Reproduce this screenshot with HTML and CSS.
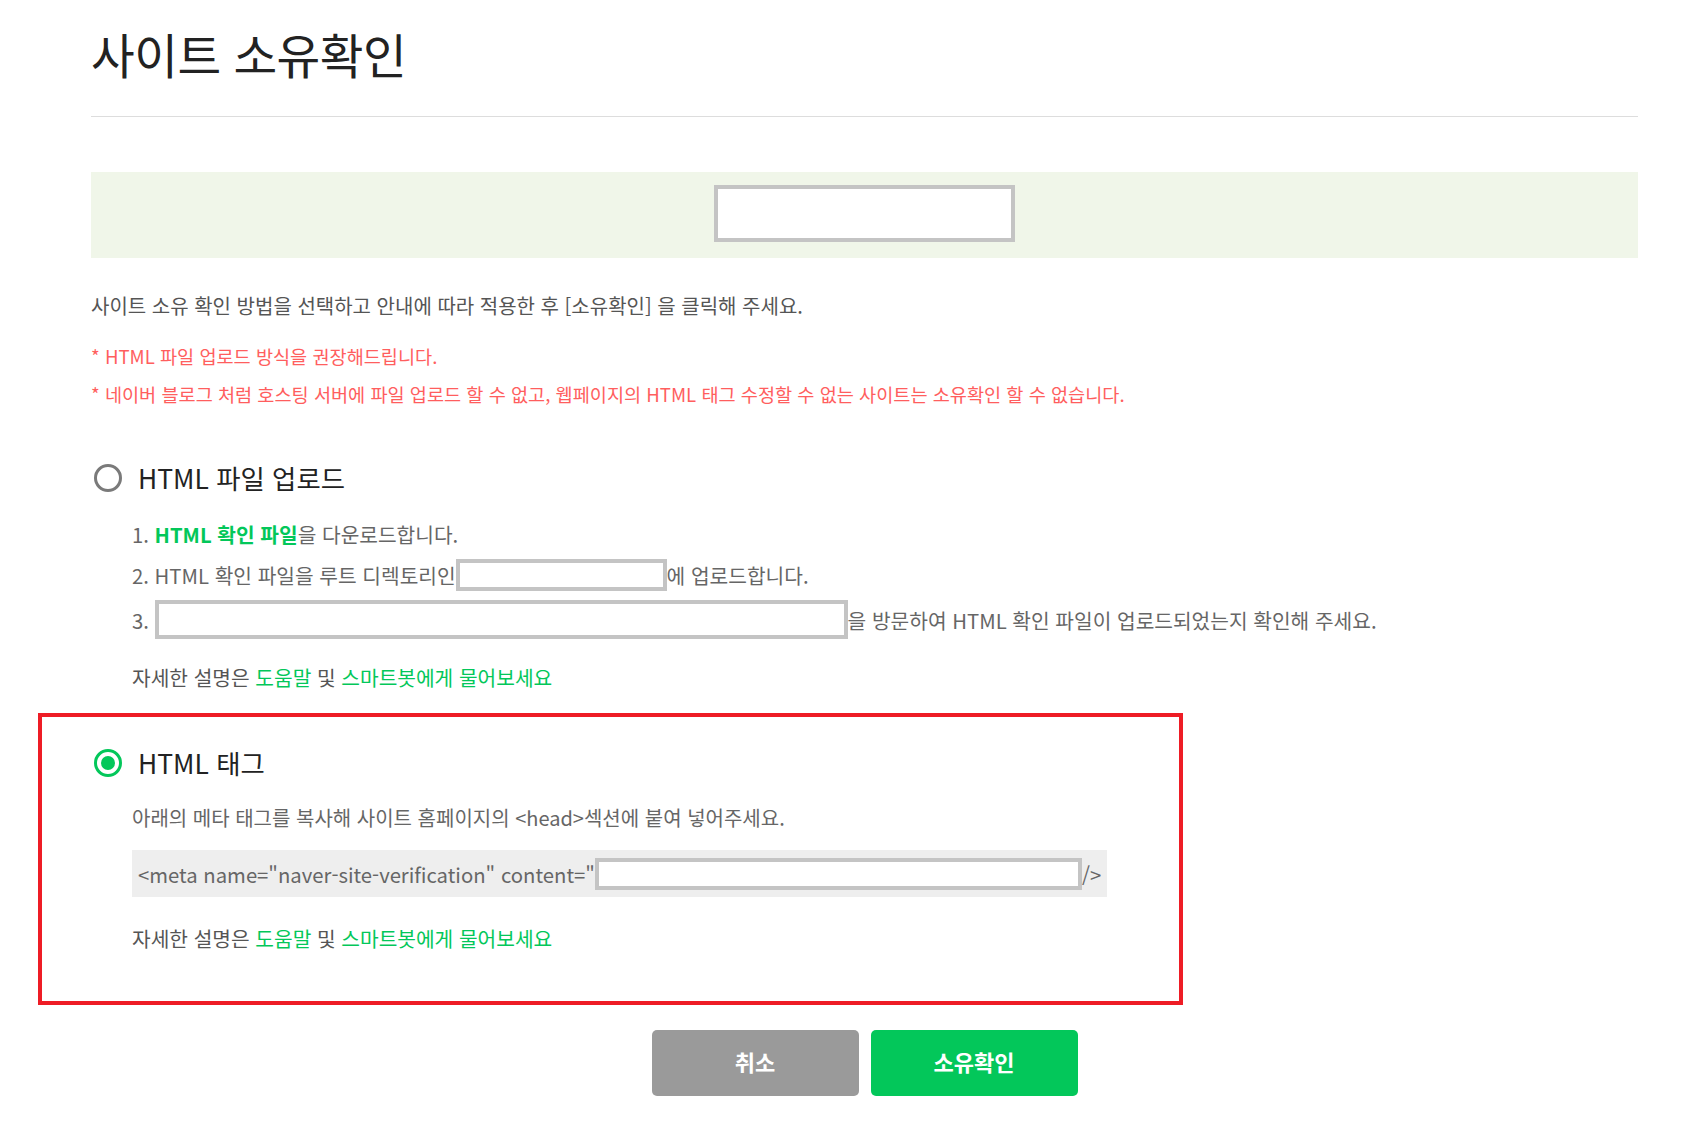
FILE: index.html
```html
<!DOCTYPE html>
<html lang="ko">
<head>
<meta charset="utf-8">
<title>사이트 소유확인</title>
<link rel="stylesheet" href="styles.css">
</head>
<body>
<div class="page">
  <h1 class="title">사이트 소유확인</h1>

  <div class="banner">
    <div class="field banner-field"></div>
  </div>

  <p class="intro">사이트 소유 확인 방법을 선택하고 안내에 따라 적용한 후 [소유확인] 을 클릭해 주세요.</p>
  <p class="warn warn-first">* HTML 파일 업로드 방식을 권장해드립니다.</p>
  <p class="warn">* 네이버 블로그 처럼 호스팅 서버에 파일 업로드 할 수 없고, 웹페이지의 HTML 태그 수정할 수 없는 사이트는 소유확인 할 수 없습니다.</p>

  <section class="method method-file">
    <div class="radio-row">
      <span class="radio"></span>
      <span class="radio-label">HTML 파일 업로드</span>
    </div>
    <ol class="steps">
      <li class="step">1.&nbsp;<a class="link strong">HTML 확인 파일</a>을 다운로드합니다.</li>
      <li class="step">2. HTML 확인 파일을 루트 디렉토리인<span class="field field-dir"></span>에 업로드합니다.</li>
      <li class="step step-tall">3.&nbsp;<span class="field field-url"></span>을 방문하여 HTML 확인 파일이 업로드되었는지 확인해 주세요.</li>
    </ol>
    <p class="help">자세한 설명은 <a class="link">도움말</a> 및 <a class="link">스마트봇에게 물어보세요</a></p>
  </section>

  <section class="method method-tag">
    <div class="radio-row">
      <span class="radio radio-checked"></span>
      <span class="radio-label">HTML 태그</span>
    </div>
    <p class="tag-desc">아래의 메타 태그를 복사해 사이트 홈페이지의 &lt;head&gt;섹션에 붙여 넣어주세요.</p>
    <div class="code">
      <span class="code-text">&lt;meta name="naver-site-verification" content="</span><span class="field field-code"></span><span class="code-text">/&gt;</span>
    </div>
    <p class="help help-tag">자세한 설명은 <a class="link">도움말</a> 및 <a class="link">스마트봇에게 물어보세요</a></p>
  </section>

  <div class="actions">
    <button class="btn btn-cancel" type="button">취소</button>
    <button class="btn btn-ok" type="button">소유확인</button>
  </div>
</div>
</body>
</html>
```

FILE: styles.css
```css
* {
  box-sizing: border-box;
}

html, body {
  margin: 0;
  padding: 0;
  background: #ffffff;
}

body {
  font-family: "Noto Sans CJK KR", "Noto Sans", sans-serif;
  color: #555555;
}

.page {
  width: 1638px;
  padding-left: 91px;
}

.title {
  margin: 0;
  padding: 26px 0 34px 0;
  height: 117px;
  line-height: 56px;
  font-size: 47.5px;
  font-weight: 400;
  color: #222222;
  border-bottom: 1px solid #dddddd;
  letter-spacing: -0.5px;
}

.banner {
  margin-top: 55px;
  height: 86px;
  background: #f0f6e9;
  display: flex;
  justify-content: center;
  padding-top: 13px;
}

.field {
  display: inline-block;
  background: #ffffff;
  border: 4px solid #c4c4c4;
  flex: none;
}

.banner-field {
  width: 301px;
  height: 57px;
}

.intro {
  margin: 34px 0 0 0;
  font-size: 20px;
  line-height: 28px;
  color: #555555;
}

.warn {
  margin: 0;
  font-size: 18.6px;
  line-height: 38px;
  color: #ff5e5e;
}

.warn-first {
  margin-top: 17px;
}

.method-file {
  margin-top: 45px;
}

.radio-row {
  display: flex;
  align-items: center;
  height: 40px;
}

.radio {
  width: 28px;
  height: 28px;
  margin-left: 3px;
  border: 3px solid #7a7a7a;
  border-radius: 50%;
  background: #ffffff;
  flex: none;
  position: relative;
}

.radio-checked {
  border-color: #03c75a;
}

.radio-checked::after {
  content: "";
  position: absolute;
  left: 4px;
  top: 4px;
  width: 14px;
  height: 14px;
  border-radius: 50%;
  background: #03c75a;
}

.radio-label {
  margin-left: 16px;
  font-size: 26.4px;
  color: #222222;
  line-height: 40px;
}

.steps {
  list-style: none;
  margin: 15px 0 0 0;
  padding: 0 0 0 41px;
}

.step {
  display: flex;
  align-items: center;
  height: 41px;
  font-size: 20.3px;
  color: #666666;
  white-space: nowrap;
}

.step-tall {
  height: 49px;
}

.link {
  color: #03c75a;
  text-decoration: none;
}

.strong {
  font-weight: 700;
}

.field-dir {
  width: 211px;
  height: 32px;
}

.field-url {
  width: 693px;
  height: 39px;
}

.help {
  margin: 18px 0 0 41px;
  font-size: 20.3px;
  line-height: 30px;
  color: #555555;
}

.method-tag {
  margin: 21px 0 0 -53px;
  width: 1145px;
  border: 4px solid #ee1c25;
  padding: 26px 0 48px 49px;
}

.tag-desc {
  margin: 20px 0 0 41px;
  font-size: 20px;
  line-height: 30px;
  color: #666666;
}

.code {
  margin: 17px 0 0 41px;
  width: 975px;
  height: 47px;
  background: #eeeeee;
  display: flex;
  align-items: center;
  padding-left: 6px;
  font-size: 20.3px;
  color: #666666;
  white-space: nowrap;
}

.field-code {
  width: 487px;
  height: 32px;
}

.help-tag {
  margin-top: 26px;
}

.actions {
  margin-top: 25px;
  display: flex;
  justify-content: center;
  gap: 12px;
}

.btn {
  width: 207px;
  height: 66px;
  border: 0;
  border-radius: 5px;
  color: #ffffff;
  font-family: "Noto Sans CJK KR", "Noto Sans", sans-serif;
  font-size: 22px;
  font-weight: 700;
  padding-bottom: 5px;
}

.btn-cancel {
  background: #9a9a9a;
}

.btn-ok {
  background: #03c75a;
}
```
